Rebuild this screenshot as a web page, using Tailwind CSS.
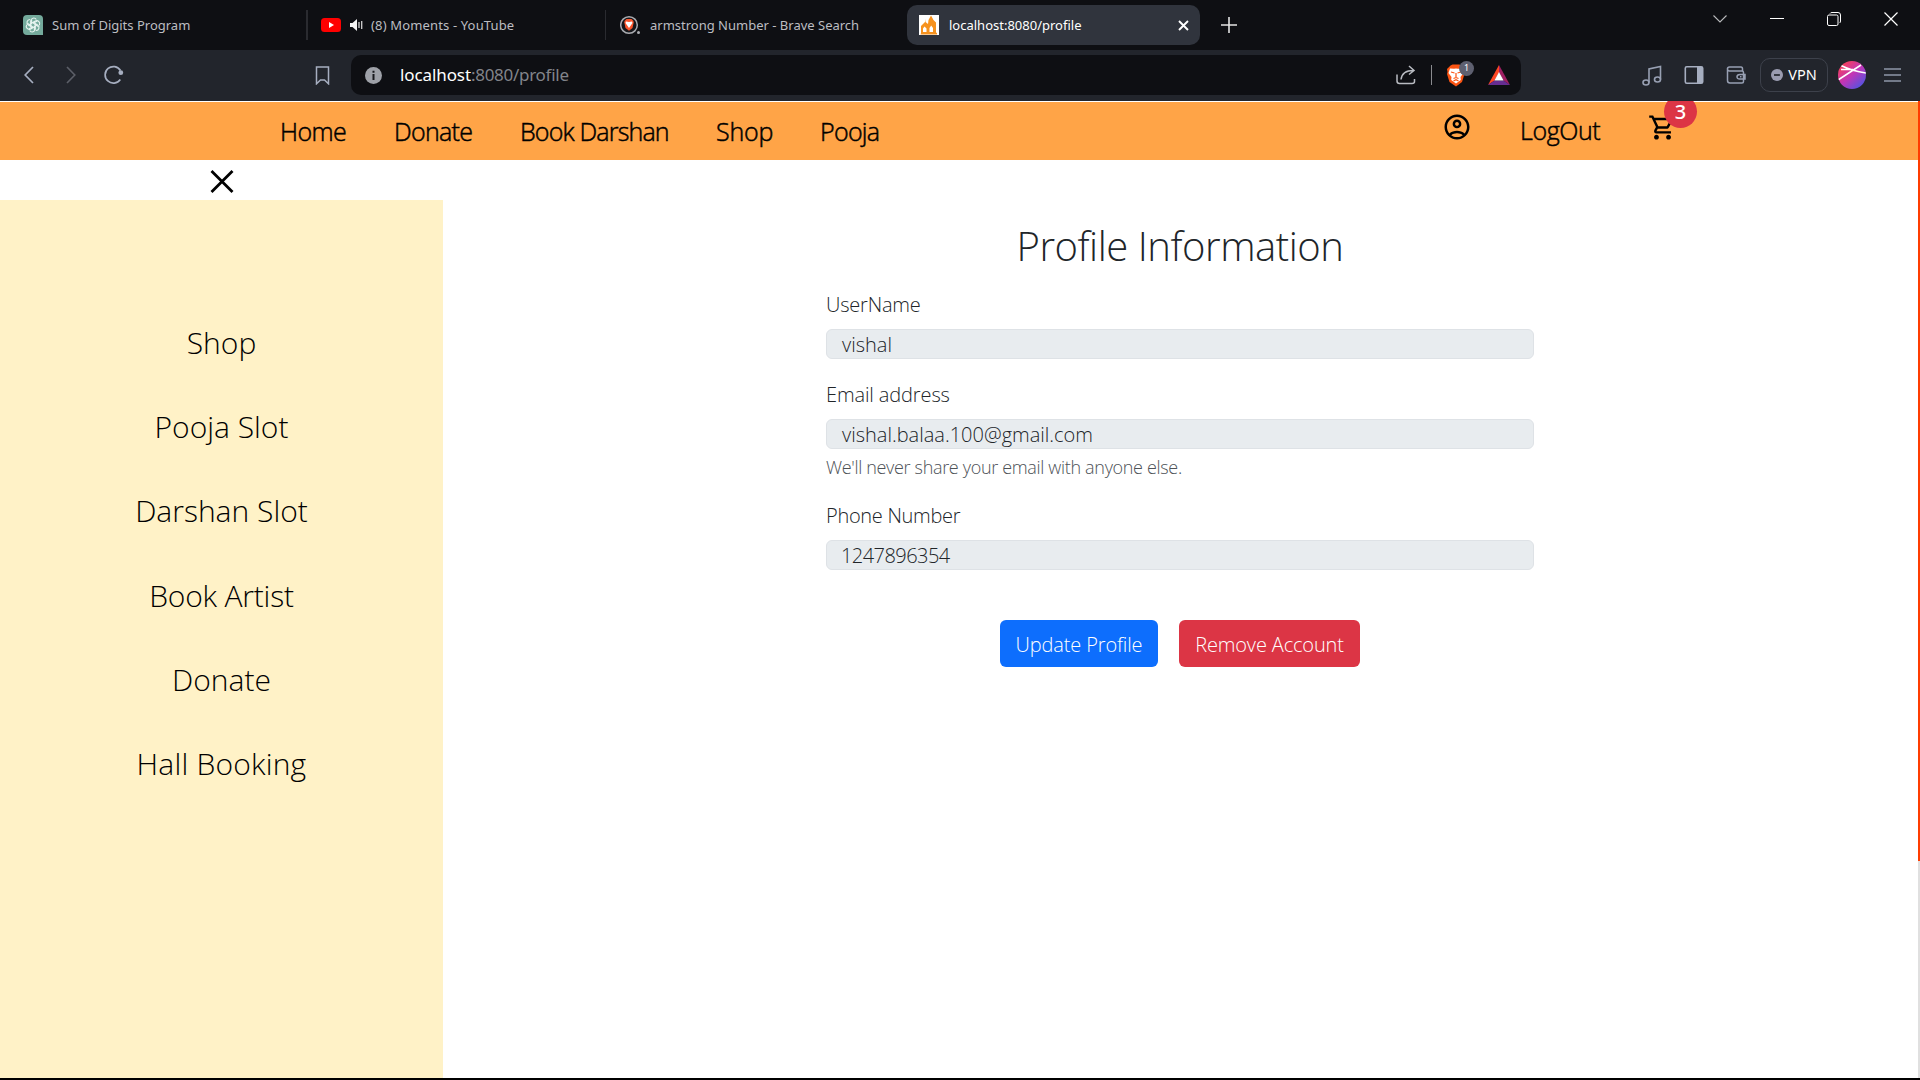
<!DOCTYPE html>
<html lang="en">
<head>
<meta charset="utf-8">
<title>Profile</title>
<script src="https://cdn.jsdelivr.net/npm/@tailwindcss/browser@4"></script>
</head>
<body class="flex h-[1080px] w-[1920px] flex-col overflow-hidden bg-black font-['Open_Sans',sans-serif]">

<!-- Tab strip -->
<div class="flex h-[50px] shrink-0 items-center bg-[#0e0f13] font-['Noto_Sans',sans-serif] text-[13px] whitespace-nowrap text-[#bcbdc1]">
  <div class="flex h-[30px] w-[308px] items-center border-r-2 border-[#2a2b30] pl-[23px]">
    <svg class="mr-[9px] size-5" viewBox="0 0 20 20" fill="none" stroke="#e9f5f2" stroke-width="1.1"><path d="M4 0h12a4 4 0 0 1 4 4v16H4a4 4 0 0 1-4-4V4a4 4 0 0 1 4-4z" fill="#74aa9c" stroke="none"/><g id="petal"><path d="M7.7 11.4V6a3 3 0 0 1 5.6-1.4M10 8.4l4-2.3"/></g><use href="#petal" transform="rotate(60 10 10)"/><use href="#petal" transform="rotate(120 10 10)"/><use href="#petal" transform="rotate(180 10 10)"/><use href="#petal" transform="rotate(240 10 10)"/><use href="#petal" transform="rotate(300 10 10)"/></svg>
    <span class="pt-px">Sum of Digits Program</span>
  </div>
  <div class="flex h-[30px] w-[298px] items-center border-r border-[#2a2b30] pl-[13px]">
    <svg class="mr-[9px] h-[14px] w-5" viewBox="0 0 20 14"><rect width="20" height="14" rx="3.5" fill="#f00"/><path d="M8 4v6l5-3z" fill="#fff"/></svg>
    <svg class="mr-2 h-3 w-[13px]" viewBox="0 0 13 12"><path d="M0 4h2.5L7 0v12L2.5 8H0z" fill="#f4f4f4"/><path d="M9 3v6M11.7 2v8" stroke="#d0d0d0" stroke-width="1.3"/></svg>
    <span class="pt-px tracking-[0.15px]">(8) Moments - YouTube</span>
  </div>
  <div class="flex h-[30px] w-[301px] items-center pl-[14px]">
    <svg class="mr-2.5 size-5" viewBox="0 0 20 20"><circle cx="9" cy="10" r="8.3" fill="#16171b" stroke="#a9abb0" stroke-width="1.5"/><circle cx="18.5" cy="17.5" r="1.5" fill="#a9abb0"/><path d="M5 5.5 6.5 4h5L13 5.5l.8 1.5-1.3 6L9 15.800l-3.500-2.800-1.300-6z" fill="#fb542b"/><path d="m6 6.500 3 .5 3-.5.500 1.500L9 13 5.500 8z" fill="#fff"/></svg>
    <span class="pt-px">armstrong Number - Brave Search</span>
  </div>
  <div class="flex h-10 w-[293px] items-center rounded-[10px] bg-[#30343d] pl-3 text-white">
    <svg class="mr-2.5 size-5" viewBox="0 0 20 20"><path d="M0 0h20v20H0z" fill="#fff"/><path d="M1.500 19.500h16.500V18l-1-.5V7.500L14.500 5 12 .5 9.500 5 9 9 6.500 7V4L6 7 2 11v7z" fill="#f6921e"/><path d="M4 17v-3.500l1.500-2 2 2V17zM10.500 17v-4l1.700-2.500 1.800 2.500v4z" fill="#fff"/></svg>
    <span class="flex-1 pt-px">localhost:8080/profile</span>
    <svg class="mr-[11px] size-[11px]" viewBox="0 0 11 11" stroke="#fff" stroke-width="1.9"><path d="m1 1 9 9M10 1l-9 9"/></svg>
  </div>
  <svg class="ml-[21px] size-4" viewBox="0 0 16 16" stroke="#e4e4e4" stroke-width="1.6"><path d="M8 0v16M0 8h16"/></svg>
  <div class="mb-3 ml-auto mr-[22px] flex items-center gap-[43px] text-white">
    <svg class="size-[14px]" viewBox="0 0 14 14" fill="none" stroke="#b9babc" stroke-width="1.1"><path d="m.5 3.500 6.500 6.500L13.500 3.500"/></svg>
    <svg class="size-[14px]" viewBox="0 0 14 14" stroke="#fff"><path d="M0 6.500h14"/></svg>
    <svg class="size-[14px]" viewBox="0 0 14 14" fill="none" stroke="#fff"><rect x=".5" y="3" width="10.500" height="10.500" rx="1.500"/><path d="M3 1.500Q3.500.5 5 .5h6Q13.500.5 13.500 3v6q0 1.500-1 2"/></svg>
    <svg class="size-[14px]" viewBox="0 0 14 14" stroke="#fff" stroke-width="1.200"><path d="m.5.5 13 13M13.500.5l-13 13"/></svg>
  </div>
</div>

<!-- Address bar -->
<div class="flex h-[51px] shrink-0 items-center bg-[#22252c] pb-px font-['Noto_Sans',sans-serif]">
  <svg class="ml-6 h-[18px] w-[10px]" viewBox="0 0 10 18" fill="none" stroke="#a6aec0" stroke-width="1.700"><path d="M9 1 1.200 9 9 17"/></svg>
  <svg class="ml-8 h-[18px] w-[10px]" viewBox="0 0 10 18" fill="none" stroke="#5c5f68" stroke-width="1.600"><path d="m1 1 7.800 8L1 17"/></svg>
  <svg class="ml-7 size-5" viewBox="0 0 20 20" fill="none" stroke="#a6aec0" stroke-width="1.700"><path d="M16.300 14.500A8.300 8.300 0 1 1 16.500 5.500"/><circle cx="16.800" cy="7.700" r="2.400" fill="#a6aec0" stroke="none"/></svg>
  <svg class="ml-[191px] h-[19px] w-[15px]" viewBox="0 0 15 19" fill="none" stroke="#a6aec0" stroke-width="1.500"><path d="M1.500 1h12v16.800l-4-3.800h-4l-4 3.800z"/></svg>
  <div class="ml-[21px] flex h-10 w-[1170px] items-center rounded-[10px] bg-[#0e0f13] pl-[14px]">
    <svg class="mr-[18px] size-[17px]" viewBox="0 0 17 17"><circle cx="8.500" cy="8.500" r="8.500" fill="#9ea1a8"/><path d="M7.500 3.700h2v2h-2zM7.500 7h2v6h-2z" fill="#17181c"/></svg>
    <span class="flex-1 text-[17px] tracking-[-0.28px] text-[#82848a]"><span class="tracking-[-0.1px] text-white">localhost</span>:8080/profile</span>
    <svg class="mr-[15px] h-5 w-5" viewBox="0 0 20 20" fill="none" stroke="#b9bcc2" stroke-width="1.500"><path d="M1 9.500V16q0 2.500 2.500 2.500H16q2.500 0 2.500-2V14M5 14.500Q6 5.500 17.500 5.500M13 1l5 4.500L13 9.500"/></svg>
    <div class="mr-[14px] h-5 w-px bg-[#8a8b8f]"></div>
    <div class="relative mr-[22px]">
      <svg class="h-[23px] w-5" viewBox="0 0 20 23"><path d="m4.500 1.500 2-1h7l2 1.500 3 2.500-.5 3.500.5 2-2.500 8L10 22.500 3.500 18 1 10l.5-2L1 5z" fill="#fb5412"/><path d="m4 4.500 4 .3 2-.3 2 .3 4-.3 1.500 4.500-3 4 .3 3L10 19.500 5.200 16l.3-3-3-4z" fill="#fff"/><path d="m5 8 3.500 1M15 8l-3.500 1M10 9v4.500M7.500 14.500l2.500-1 2.500 1M7.500 17 10 15.700l2.500 1.300" stroke="#fb5412" stroke-width="1.200" fill="none"/></svg>
      <span class="absolute -top-[3px] left-[13px] flex size-[15px] items-center justify-center rounded-full bg-[#5e6070] text-[9px] text-white">1</span>
    </div>
    <svg class="mr-[11px] h-5 w-[22px]" viewBox="0 0 22 20"><path d="M11 0v7.500L6.500 15.500 0 20z" fill="#ff4724"/><path d="M11 0v7.500l4.500 8L22 20z" fill="#9e1f63"/><path d="M0 20l6.500-4.500h9L22 20z" fill="#662d91"/><path d="m11 7 4.600 8.500H6.400z" fill="#fff"/></svg>
  </div>
  <svg class="ml-[121px] h-[21px] w-5" viewBox="0 0 20 21" fill="none" stroke="#98a0b3" stroke-width="1.600"><ellipse cx="4" cy="17.500" rx="3" ry="2.500"/><ellipse cx="15.500" cy="14.500" rx="3" ry="2.500"/><path d="M7 17.500V4l11.500-2.500v13"/></svg>
  <svg class="ml-[22px] size-5" viewBox="0 0 20 20"><rect x="1.300" y="1.800" width="17.400" height="16.400" rx="1.500" fill="none" stroke="#a6aec0" stroke-width="1.600"/><path d="M13 2h5.500v16H13z" fill="#a6aec0"/></svg>
  <svg class="ml-[22px] size-5" viewBox="0 0 20 20" fill="none" stroke="#98a0b3" stroke-width="1.500"><path d="M1.500 3v12.500q0 2.500 2.500 2.500h12q1.500 0 1.500-1.500V7.500q0-1.500-1.500-1.500H3.500Q1.500 6 1.500 4t2-2H15q1.500 0 1.500 2v2M19 9.500h-5q-3 0-3 2.300t3 2.200h5zM14 11.800h1.500"/></svg>
  <div class="ml-[14px] flex h-[34px] w-[68px] items-center justify-center gap-[5px] rounded-[10px] border border-[#3d414b] text-[14.5px] text-white">
    <svg class="size-3" viewBox="0 0 12 12"><circle cx="6" cy="6" r="6" fill="#9a9cb0"/><path d="M3 6h6" stroke="#22252c" stroke-width="1.700"/></svg><span>VPN</span>
  </div>
  <svg class="ml-[10px] size-7" viewBox="0 0 28 28"><defs><linearGradient id="avatar" x1=".15" y1=".1" x2=".85" y2=".9"><stop stop-color="#f5405b"/><stop offset=".5" stop-color="#c035b8"/><stop offset="1" stop-color="#5553e0"/></linearGradient><clipPath id="disc"><circle cx="14" cy="14" r="14"/></clipPath></defs><g clip-path="url(#disc)"><path d="M0 0h28v28H0z" fill="url(#avatar)"/><path d="M3 4.500Q14 10 28 12M0 19 23 4M3 8.500 15 8.500" stroke="#fff" stroke-width="1.500" fill="none"/></g></svg>
  <svg class="ml-[18px] h-[14px] w-[17px]" viewBox="0 0 17 14" stroke="#8f97a8" stroke-width="1.500"><path d="M0 1h17M0 7h17M0 13h17"/></svg>
</div>

<!-- Web page -->
<div class="flex h-[977px] shrink-0 overflow-hidden bg-white">
  <div class="flex w-[1918px] flex-col">
    <nav class="mt-px flex h-[58px] items-center bg-[#ffa447] pl-[280px] text-[25px] font-light whitespace-nowrap text-black [-webkit-text-stroke:0.5px_black]">
      <a class="mt-0.5 w-[114px] tracking-[-0.6px]">Home</a>
      <a class="mt-0.5 w-[126px] tracking-[-0.7px]">Donate</a>
      <a class="mt-0.5 w-[196px] tracking-[-0.82px]">Book Darshan</a>
      <a class="mt-0.5 w-[104px] tracking-[-0.2px]">Shop</a>
      <a class="mt-0.5 tracking-[-0.7px]">Pooja</a>
      <svg class="mr-12 mb-[9px] ml-auto size-[30px]" viewBox="0 0 24 24"><path d="M12 2C6.480 2 2 6.480 2 12s4.480 10 10 10 10-4.480 10-10S17.520 2 12 2zM7.350 18.500C8.660 17.560 10.260 17 12 17s3.340.56 4.650 1.500C15.340 19.440 13.740 20 12 20s-3.340-.56-4.650-1.500zm10.790-1.380C16.450 15.800 14.320 15 12 15s-4.450.8-6.140 2.120C4.700 15.730 4 13.950 4 12c0-4.420 3.580-8 8-8s8 3.580 8 8c0 1.950-.7 3.730-1.860 5.120zM12 6c-1.930 0-3.500 1.570-3.500 3.500S10.070 13 12 13s3.500-1.570 3.500-3.500S13.930 6 12 6zm0 5c-.83 0-1.500-.67-1.500-1.500S11.170 8 12 8s1.500.67 1.500 1.500S12.830 11 12 11z"/></svg>
      <a class="w-[128px] tracking-[-0.4px]">LogOut</a>
      <div class="relative mr-[241px] mb-[8px]">
        <svg class="size-[29px]" viewBox="0 0 24 24"><path d="M15.550 13c.75 0 1.410-.41 1.750-1.030l3.580-6.490A.996.996 0 0 0 20.010 4H5.210l-.94-2H1v2h2l3.600 7.590-1.350 2.440C4.520 15.370 5.480 17 7 17h12v-2H7l1.100-2h7.450zM6.160 6h12.150l-2.760 5H8.530L6.160 6zM7 18c-1.100 0-1.990.9-1.990 2S5.900 22 7 22s2-.9 2-2-.9-2-2-2zm10 0c-1.100 0-1.990.9-1.990 2s.89 2 1.990 2 2-.9 2-2-.9-2-2-2z"/></svg>
        <span class="absolute -top-[18px] left-[16px] flex h-[33px] w-[33px] items-center justify-center rounded-full bg-[#dc3545] pt-0.5 font-['Noto_Sans',sans-serif] text-[20px] leading-5 font-medium text-white [-webkit-text-stroke:0px]">3</span>
      </div>
    </nav>
    <div class="flex flex-1">
      <aside class="flex w-[443px] flex-col">
        <div class="flex h-10 items-center justify-center pt-px">
          <svg class="size-6" viewBox="0 0 24 24" stroke="#000" stroke-width="2.800"><path d="M1.500 2 22.500 23M22.500 2 1.500 23"/></svg>
        </div>
        <div class="flex flex-1 flex-col bg-[#fff2c7] pt-[101px] text-center text-[30px] leading-[84.2px] font-light text-black">
          <a>Shop</a><a>Pooja Slot</a><a>Darshan Slot</a><a class="tracking-[-0.2px]">Book Artist</a><a>Donate</a><a class="tracking-[0.2px]">Hall Booking</a>
        </div>
      </aside>
      <main class="ml-[383px] flex w-[708px] flex-col pt-[62px] text-[20px] leading-[30px] font-light whitespace-nowrap text-[#212529]">
        <h1 class="mb-5 text-center text-[40px] leading-[48px] tracking-[-0.45px]">Profile Information</h1>
        <label class="mb-[9px] tracking-[-0.2px]">UserName</label>
        <div class="mb-5 h-[30px] rounded-md border border-[#dee2e6] bg-[#e8ecef] pl-[15px] leading-[30px]">vishal</div>
        <label class="mb-[9px] pt-px tracking-[-0.12px]">Email address</label>
        <div class="mb-[3px] h-[30px] rounded-md border border-[#dee2e6] bg-[#e8ecef] pl-[15px] leading-[30px]">vishal.balaa.100@gmail.com</div>
        <small class="mb-[18px] text-[18px] tracking-[-0.33px] text-[#4d5257]">We'll never share your email with anyone else.</small>
        <label class="mb-[9px] pt-px tracking-[-0.3px]">Phone Number</label>
        <div class="h-[30px] rounded-md border border-[#dee2e6] bg-[#e8ecef] pl-[14px] leading-[30px] tracking-[-0.55px]">1247896354</div>
        <div class="mt-[50px] flex justify-center gap-[21px] tracking-[-0.15px] text-white">
          <button class="h-[47px] w-[158px] rounded-md bg-[#0d6efd] pt-0.5">Update Profile</button>
          <button class="h-[47px] w-[181px] rounded-md bg-[#dc3545] pt-0.5">Remove Account</button>
        </div>
      </main>
    </div>
  </div>
  <div class="w-0.5 bg-[#e0e0e0]"><div class="h-[760px] bg-[#ff3c00]"></div></div>
</div>
</body>
</html>
